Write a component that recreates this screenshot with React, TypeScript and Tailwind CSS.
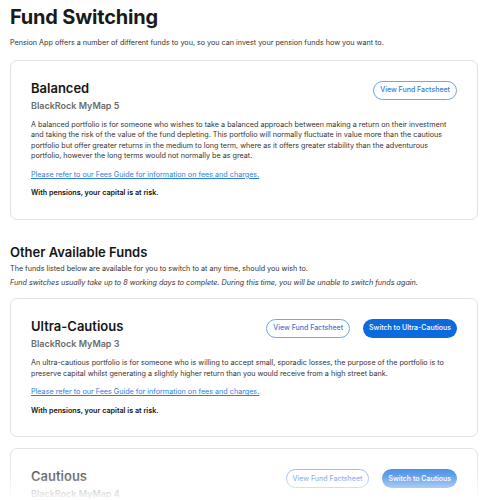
type Fund = {
  name: string;
  product: string;
  description: string;
  current?: boolean;
};

const currentFund: Fund = {
  name: 'Balanced',
  product: 'BlackRock MyMap 5',
  description:
    'A balanced portfolio is for someone who wishes to take a balanced approach between making a return on their investment and taking the risk of the value of the fund depleting. This portfolio will normally fluctuate in value more than the cautious portfolio but offer greater returns in the medium to long term, where as it offers greater stability than the adventurous portfolio, however the long terms would not normally be as great.',
  current: true,
};

const otherFunds: Fund[] = [
  {
    name: 'Ultra-Cautious',
    product: 'BlackRock MyMap 3',
    description:
      'An ultra-cautious portfolio is for someone who is willing to accept small, sporadic losses, the purpose of the portfolio is to preserve capital whilst generating a slightly higher return than you would receive from a high street bank.',
  },
  {
    name: 'Cautious',
    product: 'BlackRock MyMap 4',
    description:
      'A cautious portfolio is for someone who is willing to accept some losses in exchange for a higher return than a bank account over the medium term.',
  },
];

function FundCard({ fund }: { fund: Fund }) {
  return (
    <div className="rounded-[7px] border border-[#e2e2e2] bg-white px-[20px] pt-[19px] pb-[20px]">
      <div className="flex items-start justify-between">
        <div>
          <h3 className="text-[13px] font-semibold leading-[16px] text-[#161616]">{fund.name}</h3>
          <p className="mt-[4px] text-[9px] font-semibold leading-[12px] text-[#6b6b6b]">{fund.product}</p>
        </div>
        <div className="mt-[1px] flex items-center gap-[13px]">
          <button className="h-[19px] rounded-full border border-[#6ea6ef] px-[6px] text-[7px] font-medium text-[#3a78d8]">
            View Fund Factsheet
          </button>
          {!fund.current && (
            <button className="h-[19px] rounded-full bg-[#0b6bde] px-[6px] text-[7px] font-medium text-white">
              Switch to {fund.name}
            </button>
          )}
        </div>
      </div>
      <p className="mt-[8px] text-[7.2px] leading-[10.6px] text-[#333333]">{fund.description}</p>
      <a href="#" className="mt-[8px] block text-[7.2px] leading-[10.6px] text-[#2f7de1] underline">
        Please refer to our Fees Guide for information on fees and charges.
      </a>
      <p className="mt-[8px] text-[7.2px] font-semibold leading-[10.6px] text-[#111111]">
        With pensions, your capital is at risk.
      </p>
    </div>
  );
}

export default function App() {
  return (
    <div
      className="relative h-[500px] overflow-hidden bg-white px-[10px] pt-[5px]"
      style={{ fontFamily: 'Inter, "Noto Sans", sans-serif' }}
    >
      <h1 className="text-[20px] font-bold leading-[24px] tracking-[-0.2px] text-[#1a1a1a]">Fund Switching</h1>
      <p className="mt-[9px] text-[7.2px] leading-[10.5px] text-[#333333]">
        Pension App offers a number of different funds to you, so you can invest your pension funds how you want to.
      </p>

      <div className="mt-[11px]">
        <FundCard fund={currentFund} />
      </div>

      <h2 className="mt-[24px] text-[13px] font-semibold leading-[16px] text-[#161616]">Other Available Funds</h2>
      <p className="mt-[4px] text-[7.2px] leading-[10.5px] text-[#333333]">
        The funds listed below are available for you to switch to at any time, should you wish to.
      </p>
      <p className="mt-[3px] text-[7.2px] italic leading-[10.5px] text-[#333333]">
        Fund switches usually take up to 8 working days to complete. During this time, you will be unable to switch funds again.
      </p>

      <div className="mt-[10px] flex flex-col gap-[11px]">
        {otherFunds.map((fund) => (
          <FundCard key={fund.name} fund={fund} />
        ))}
      </div>

      <div className="pointer-events-none absolute inset-x-0 bottom-0 h-[50px] bg-gradient-to-b from-white/0 via-white/35 to-white/95" />
    </div>
  );
}
